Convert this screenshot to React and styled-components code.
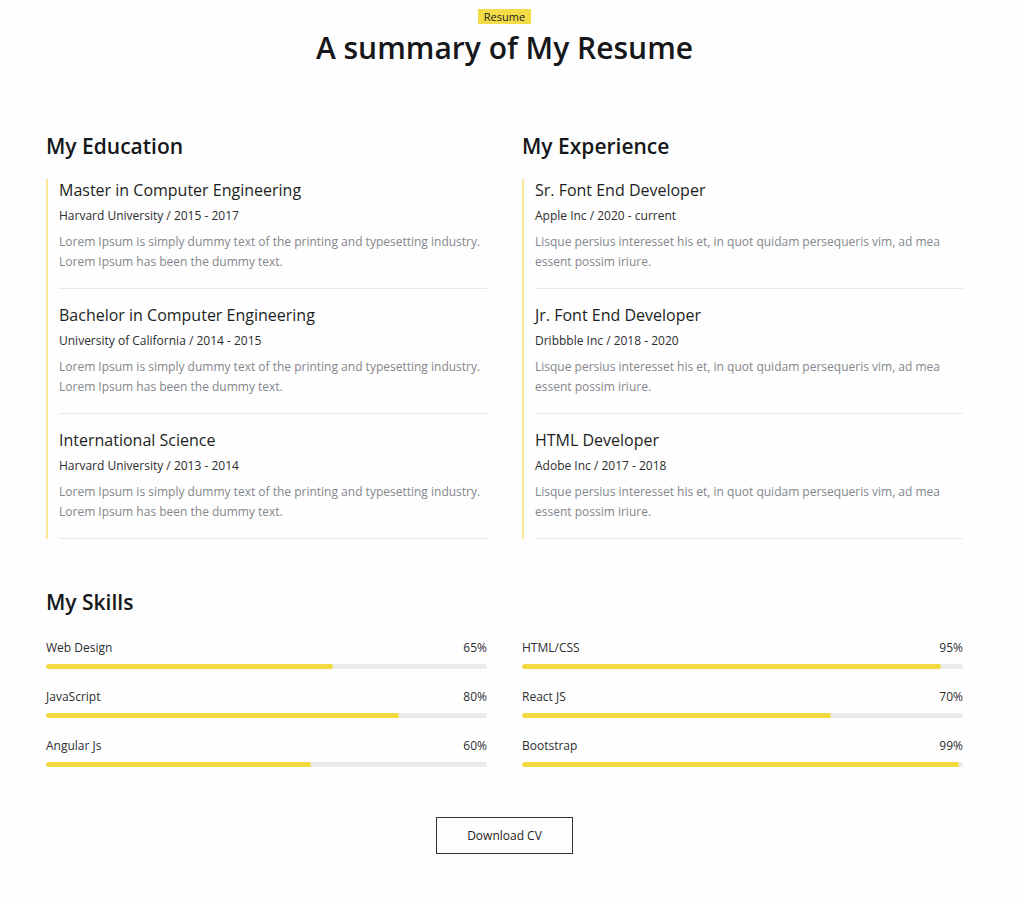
import React from 'react';
import styled, { createGlobalStyle } from 'styled-components';

const GlobalStyle = createGlobalStyle`
  body {
    margin: 0;
    background: #fefefe;
    font-family: "Open Sans", "Liberation Sans", sans-serif;
    color: #1c1e21;
  }
  * { box-sizing: border-box; }
  p, h1, h2, h3 { margin: 0; }
`;

const Page = styled.div`
  width: 1009px;
  padding: 9px 0 48px;
`;

const Container = styled.div`
  width: 917px;
  margin: 0 auto;
`;

const Header = styled.div`
  display: flex;
  flex-direction: column;
  align-items: center;
`;

const Badge = styled.span`
  background: #f3dc47;
  font-size: 11px;
  line-height: 15px;
  padding: 0 6px;
  color: #222;
`;

const Title = styled.h1`
  font-size: 30px;
  font-weight: 600;
  line-height: 40px;
  margin-top: 4px;
  color: #15171a;
`;

const Columns = styled.div`
  display: grid;
  grid-template-columns: 1fr 1fr;
  column-gap: 35px;
  margin-top: ${p => p.$top}px;
`;

const SectionTitle = styled.h2`
  font-size: 21px;
  font-weight: 600;
  line-height: 30px;
  color: #15171a;
  margin-top: ${p => p.$top || 0}px;
`;

const Timeline = styled.div`
  margin-top: 18px;
  border-left: 2px solid #f8e79c;
  padding-left: 11px;
`;

const Item = styled.div`
  padding: 0 0 16px;
  margin-bottom: 15px;
  border-bottom: 1px solid #e9e9e9;
  &:last-child { margin-bottom: 0; }
`;

const ItemTitle = styled.h3`
  font-size: 16px;
  font-weight: 500;
  line-height: 22px;
  color: #1c1e21;
`;

const ItemMeta = styled.p`
  font-size: 12px;
  line-height: 16px;
  margin-top: 7px;
  color: #2b2d30;
`;

const ItemText = styled.p`
  font-size: 12px;
  line-height: 20px;
  margin-top: 8px;
  color: #84878c;
`;

const SkillRow = styled.div`
  margin-top: ${p => p.$first ? 23 : 20}px;
`;

const SkillHead = styled.div`
  display: flex;
  justify-content: space-between;
  font-size: 12px;
  line-height: 16px;
  color: #2b2d30;
`;

const Track = styled.div`
  margin-top: 8px;
  height: 5px;
  border-radius: 3px;
  background: #ebebeb;
  overflow: hidden;
`;

const Fill = styled.div`
  height: 100%;
  border-radius: 3px;
  background: #f3d93f;
`;

const ButtonWrap = styled.div`
  display: flex;
  justify-content: center;
  margin-top: 50px;
`;

const Button = styled.button`
  width: 137px;
  height: 37px;
  border: 1px solid #333;
  background: transparent;
  font-family: inherit;
  font-size: 12px;
  color: #222;
`;

const education = [
  ['Master in Computer Engineering', 'Harvard University / 2015 - 2017'],
  ['Bachelor in Computer Engineering', 'University of California / 2014 - 2015'],
  ['International Science', 'Harvard University / 2013 - 2014'],
];
const eduText = 'Lorem Ipsum is simply dummy text of the printing and typesetting industry. Lorem Ipsum has been the dummy text.';

const experience = [
  ['Sr. Font End Developer', 'Apple Inc / 2020 - current'],
  ['Jr. Font End Developer', 'Dribbble Inc / 2018 - 2020'],
  ['HTML Developer', 'Adobe Inc / 2017 - 2018'],
];
const expText = 'Lisque persius interesset his et, in quot quidam persequeris vim, ad mea essent possim iriure.';

const skillsLeft = [['Web Design', 65], ['JavaScript', 80], ['Angular Js', 60]];
const skillsRight = [['HTML/CSS', 95], ['React JS', 70], ['Bootstrap', 99]];

function Section({ title, items, text }) {
  return (
    <div>
      <SectionTitle>{title}</SectionTitle>
      <Timeline>
        {items.map(([t, m]) => (
          <Item key={t}>
            <ItemTitle>{t}</ItemTitle>
            <ItemMeta>{m}</ItemMeta>
            <ItemText>{text}</ItemText>
          </Item>
        ))}
      </Timeline>
    </div>
  );
}

function Skills({ list }) {
  return (
    <div>
      {list.map(([name, pct], i) => (
        <SkillRow key={name} $first={i === 0}>
          <SkillHead><span>{name}</span><span>{pct}%</span></SkillHead>
          <Track><Fill style={{ width: `${pct}%` }} /></Track>
        </SkillRow>
      ))}
    </div>
  );
}

export default function App() {
  return (
    <Page>
      <GlobalStyle />
      <Container>
        <Header>
          <Badge>Resume</Badge>
          <Title>A summary of My Resume</Title>
        </Header>
        <Columns $top={63}>
          <Section title="My Education" items={education} text={eduText} />
          <Section title="My Experience" items={experience} text={expText} />
        </Columns>
        <SectionTitle $top={48}>My Skills</SectionTitle>
        <Columns $top={0}>
          <Skills list={skillsLeft} />
          <Skills list={skillsRight} />
        </Columns>
        <ButtonWrap>
          <Button>Download CV</Button>
        </ButtonWrap>
      </Container>
    </Page>
  );
}
